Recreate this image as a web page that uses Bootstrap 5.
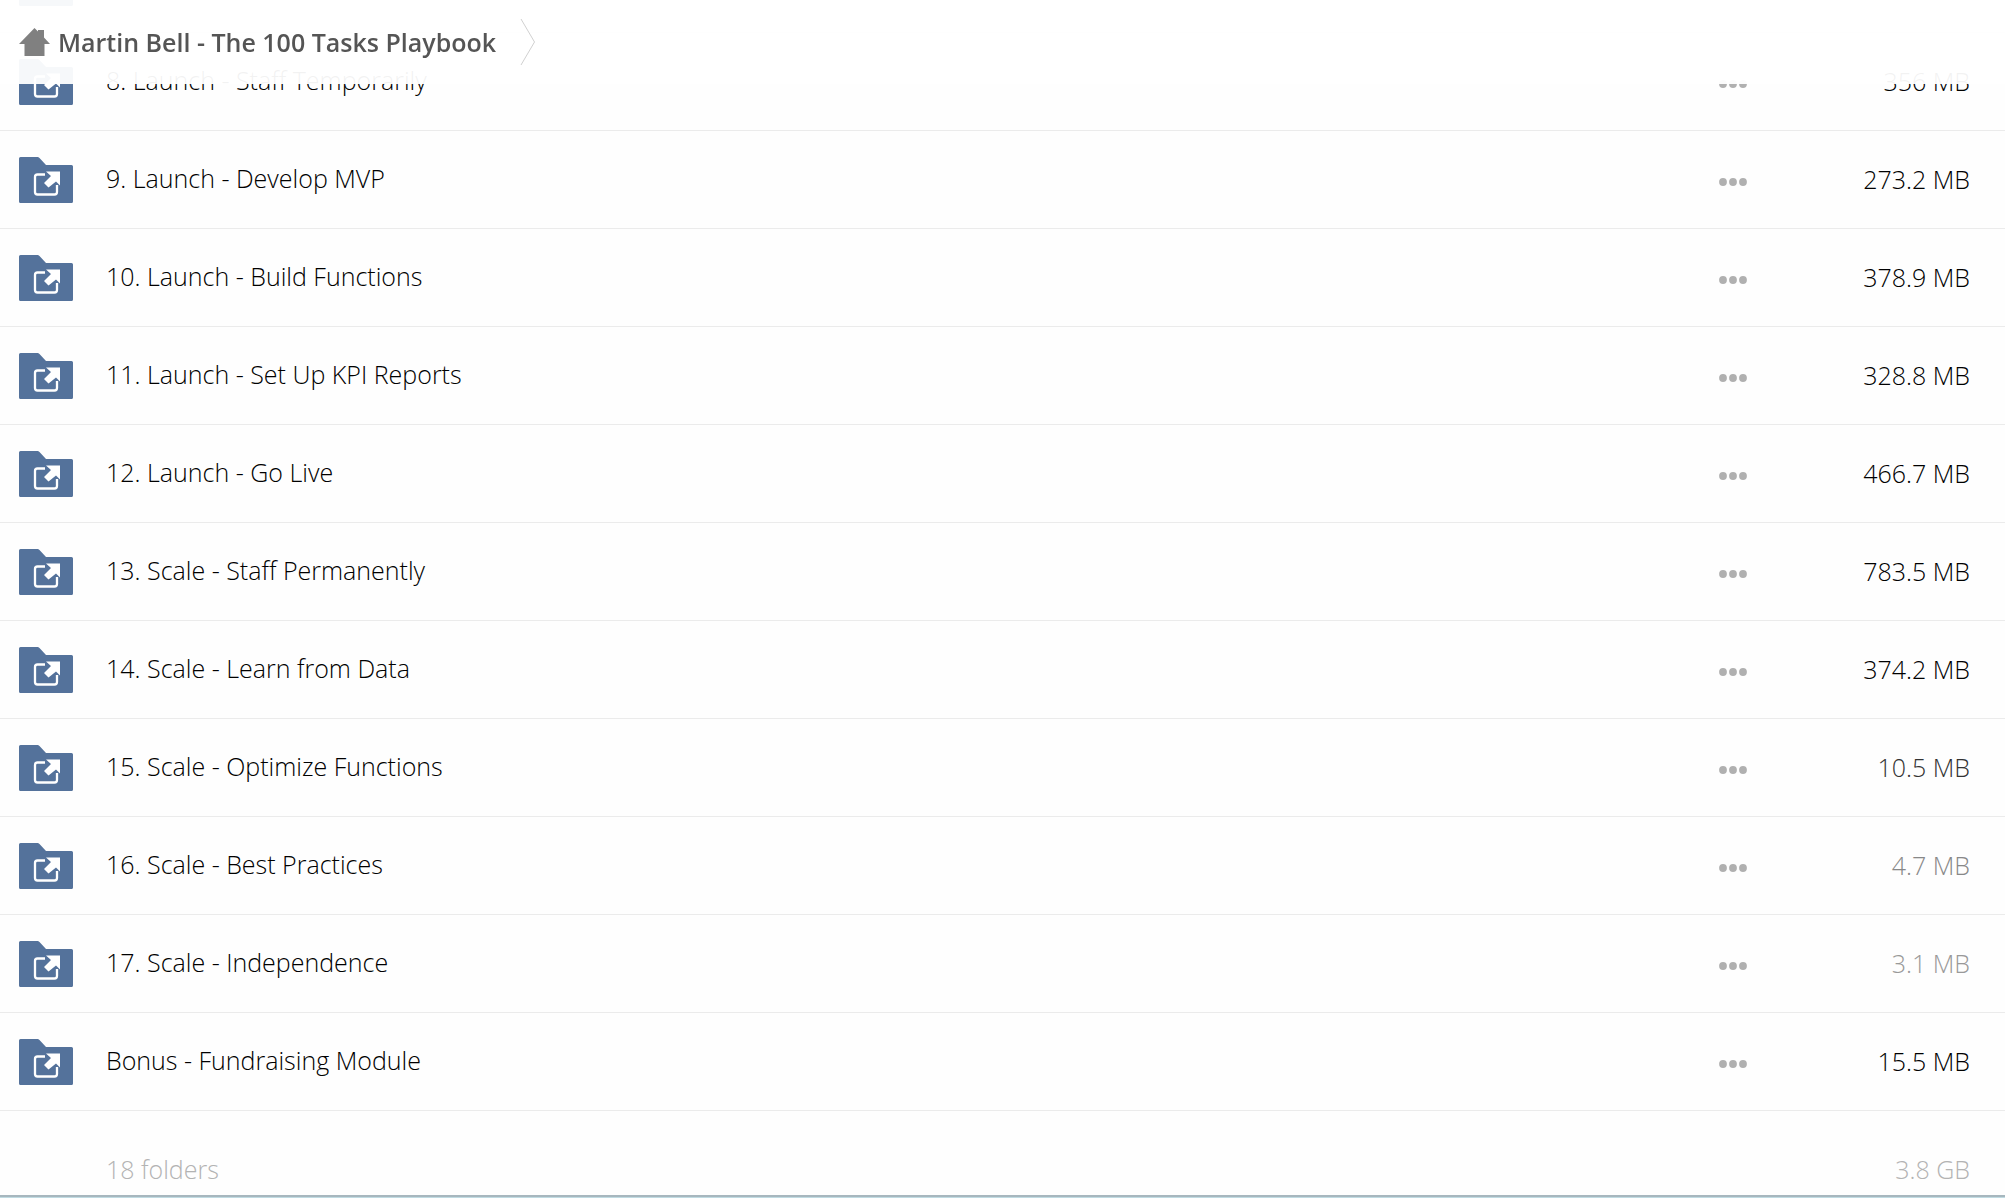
<!DOCTYPE html>
<html lang="en">
<head>
<meta charset="utf-8">
<meta name="viewport" content="width=device-width, initial-scale=1">
<title>Martin Bell - The 100 Tasks Playbook</title>
<link rel="stylesheet" href="https://cdn.jsdelivr.net/npm/bootstrap@5.3.0/dist/css/bootstrap.min.css">
<style>
body { font-family: "Open Sans", "Noto Sans", sans-serif; font-size: 25px; font-weight: 300; line-height: 34px; color: #000; background: #fefefe; }
.crumb-bar { height: 84px; padding: 0 19px; background: rgba(255, 255, 255, .95); }
.crumb-link { color: #555; font-weight: 600; gap: 8px; }
.crumb-sep { margin-left: 24px; }
.file-table { --bs-table-bg: transparent; --bs-table-color: inherit; color: inherit; table-layout: fixed; }
.file-table > tbody > tr { height: 98px; }
.file-table > tbody > tr > td { padding: 0; border-bottom: 1px solid #ebebeb; vertical-align: middle; white-space: nowrap; }
.file-table > tbody > tr > .col-icon { width: 106px; padding-left: 19px; }
.file-table > tbody > tr > .col-name { padding-bottom: 4px; }
.file-table > tbody > tr > .col-more { width: 140px; }
.file-table > tbody > tr > .col-size { width: 150px; padding: 0 35px 2px 0; }
.file-table svg { display: block; }
.more-btn { padding: 11px 4px 6px; }
.file-table .size-mid { color: #333; }
.file-table .size-low { color: #888; }
.file-table .size-min { color: #999; }
.file-total { color: #b3b3b3; padding: 41px 35px 9px 106px; }
.base-line { height: 3px; border-top: 2px solid #a7b7be; background: #c0dbe2; }
</style>
<script src="https://cdn.jsdelivr.net/npm/bootstrap@5.3.0/dist/js/bootstrap.bundle.min.js"></script>
</head>
<body class="vh-100 overflow-hidden">
<svg class="d-none" aria-hidden="true">
  <symbol id="folder" viewBox="0 0 54 46">
    <path fill="#54729b" d="M1.500 0H18.500Q19.500 0 20.500 1L27 8H52.500Q54 8 54 9.500V44.500Q54 46 52.500 46H1.500Q0 46 0 44.500V1.500Q0 0 1.500 0Z"/>
    <path fill="none" stroke="#fff" stroke-width="2.300" d="M26 17.500H18.500Q16 17.500 16 20V35Q16 37.500 18.500 37.500H35.500Q38 37.500 38 35V28"/>
    <path fill="#fff" d="M27 14.500H41V28.500L37 24.500L29.500 30.500L25 26L32 19Z"/>
  </symbol>
  <symbol id="dots" viewBox="0 0 28 8">
    <g fill="#b0b0b0"><circle cx="4" cy="4" r="3.900"/><circle cx="14" cy="4" r="3.900"/><circle cx="24" cy="4" r="3.900"/></g>
  </symbol>
</svg>

<header class="crumb-bar fixed-top d-flex align-items-center">
  <nav class="d-flex align-items-center" aria-label="Breadcrumb">
    <a class="crumb-link d-flex align-items-center text-decoration-none" href="#">
      <svg width="31" height="28" viewBox="0 0 31 28" aria-hidden="true"><path fill="#808080" d="M15.500 0L19 3.500V2H25V9.500L31 16H25.500V28H5.500V16H0Z"/></svg>
      <span>Martin Bell - The 100 Tasks Playbook</span>
    </a>
    <svg class="crumb-sep" width="16" height="48" viewBox="0 0 16 48" aria-hidden="true"><path fill="none" stroke="#d0d0d0" d="M1 1L14.500 24L1 47"/></svg>
  </nav>
</header>

<main class="h-100 overflow-hidden d-flex flex-column justify-content-end">
  <table class="file-table table mb-0 flex-shrink-0" aria-label="Folders">
    <tbody id="rows"></tbody>
  </table>
  <footer class="file-total d-flex justify-content-between flex-shrink-0"><span>18 folders</span><span>3.8 GB</span></footer>
  <div class="base-line flex-shrink-0"></div>
</main>
<script>
const folders = [
  ["", ""],
  ["8. Launch - Staff Temporarily", "356 MB"],
  ["9. Launch - Develop MVP", "273.2 MB"],
  ["10. Launch - Build Functions", "378.9 MB"],
  ["11. Launch - Set Up KPI Reports", "328.8 MB"],
  ["12. Launch - Go Live", "466.7 MB"],
  ["13. Scale - Staff Permanently", "783.5 MB"],
  ["14. Scale - Learn from Data", "374.2 MB"],
  ["15. Scale - Optimize Functions", "10.5 MB", "size-mid"],
  ["16. Scale - Best Practices", "4.7 MB", "size-low"],
  ["17. Scale - Independence", "3.1 MB", "size-min"],
  ["Bonus - Fundraising Module", "15.5 MB"]
];
document.getElementById("rows").innerHTML = folders.map(([name, size, tone = ""]) => `
  <tr>
    <td class="col-icon"><svg width="54" height="46" aria-hidden="true"><use href="#folder"/></svg></td>
    <td class="col-name"><a class="text-reset text-decoration-none" href="#">${name}</a></td>
    <td class="col-more"><button type="button" class="more-btn btn border-0 d-block" aria-label="More"><svg width="28" height="8" aria-hidden="true"><use href="#dots"/></svg></button></td>
    <td class="col-size text-end ${tone}">${size}</td>
  </tr>`).join("");
</script>
</body>
</html>
